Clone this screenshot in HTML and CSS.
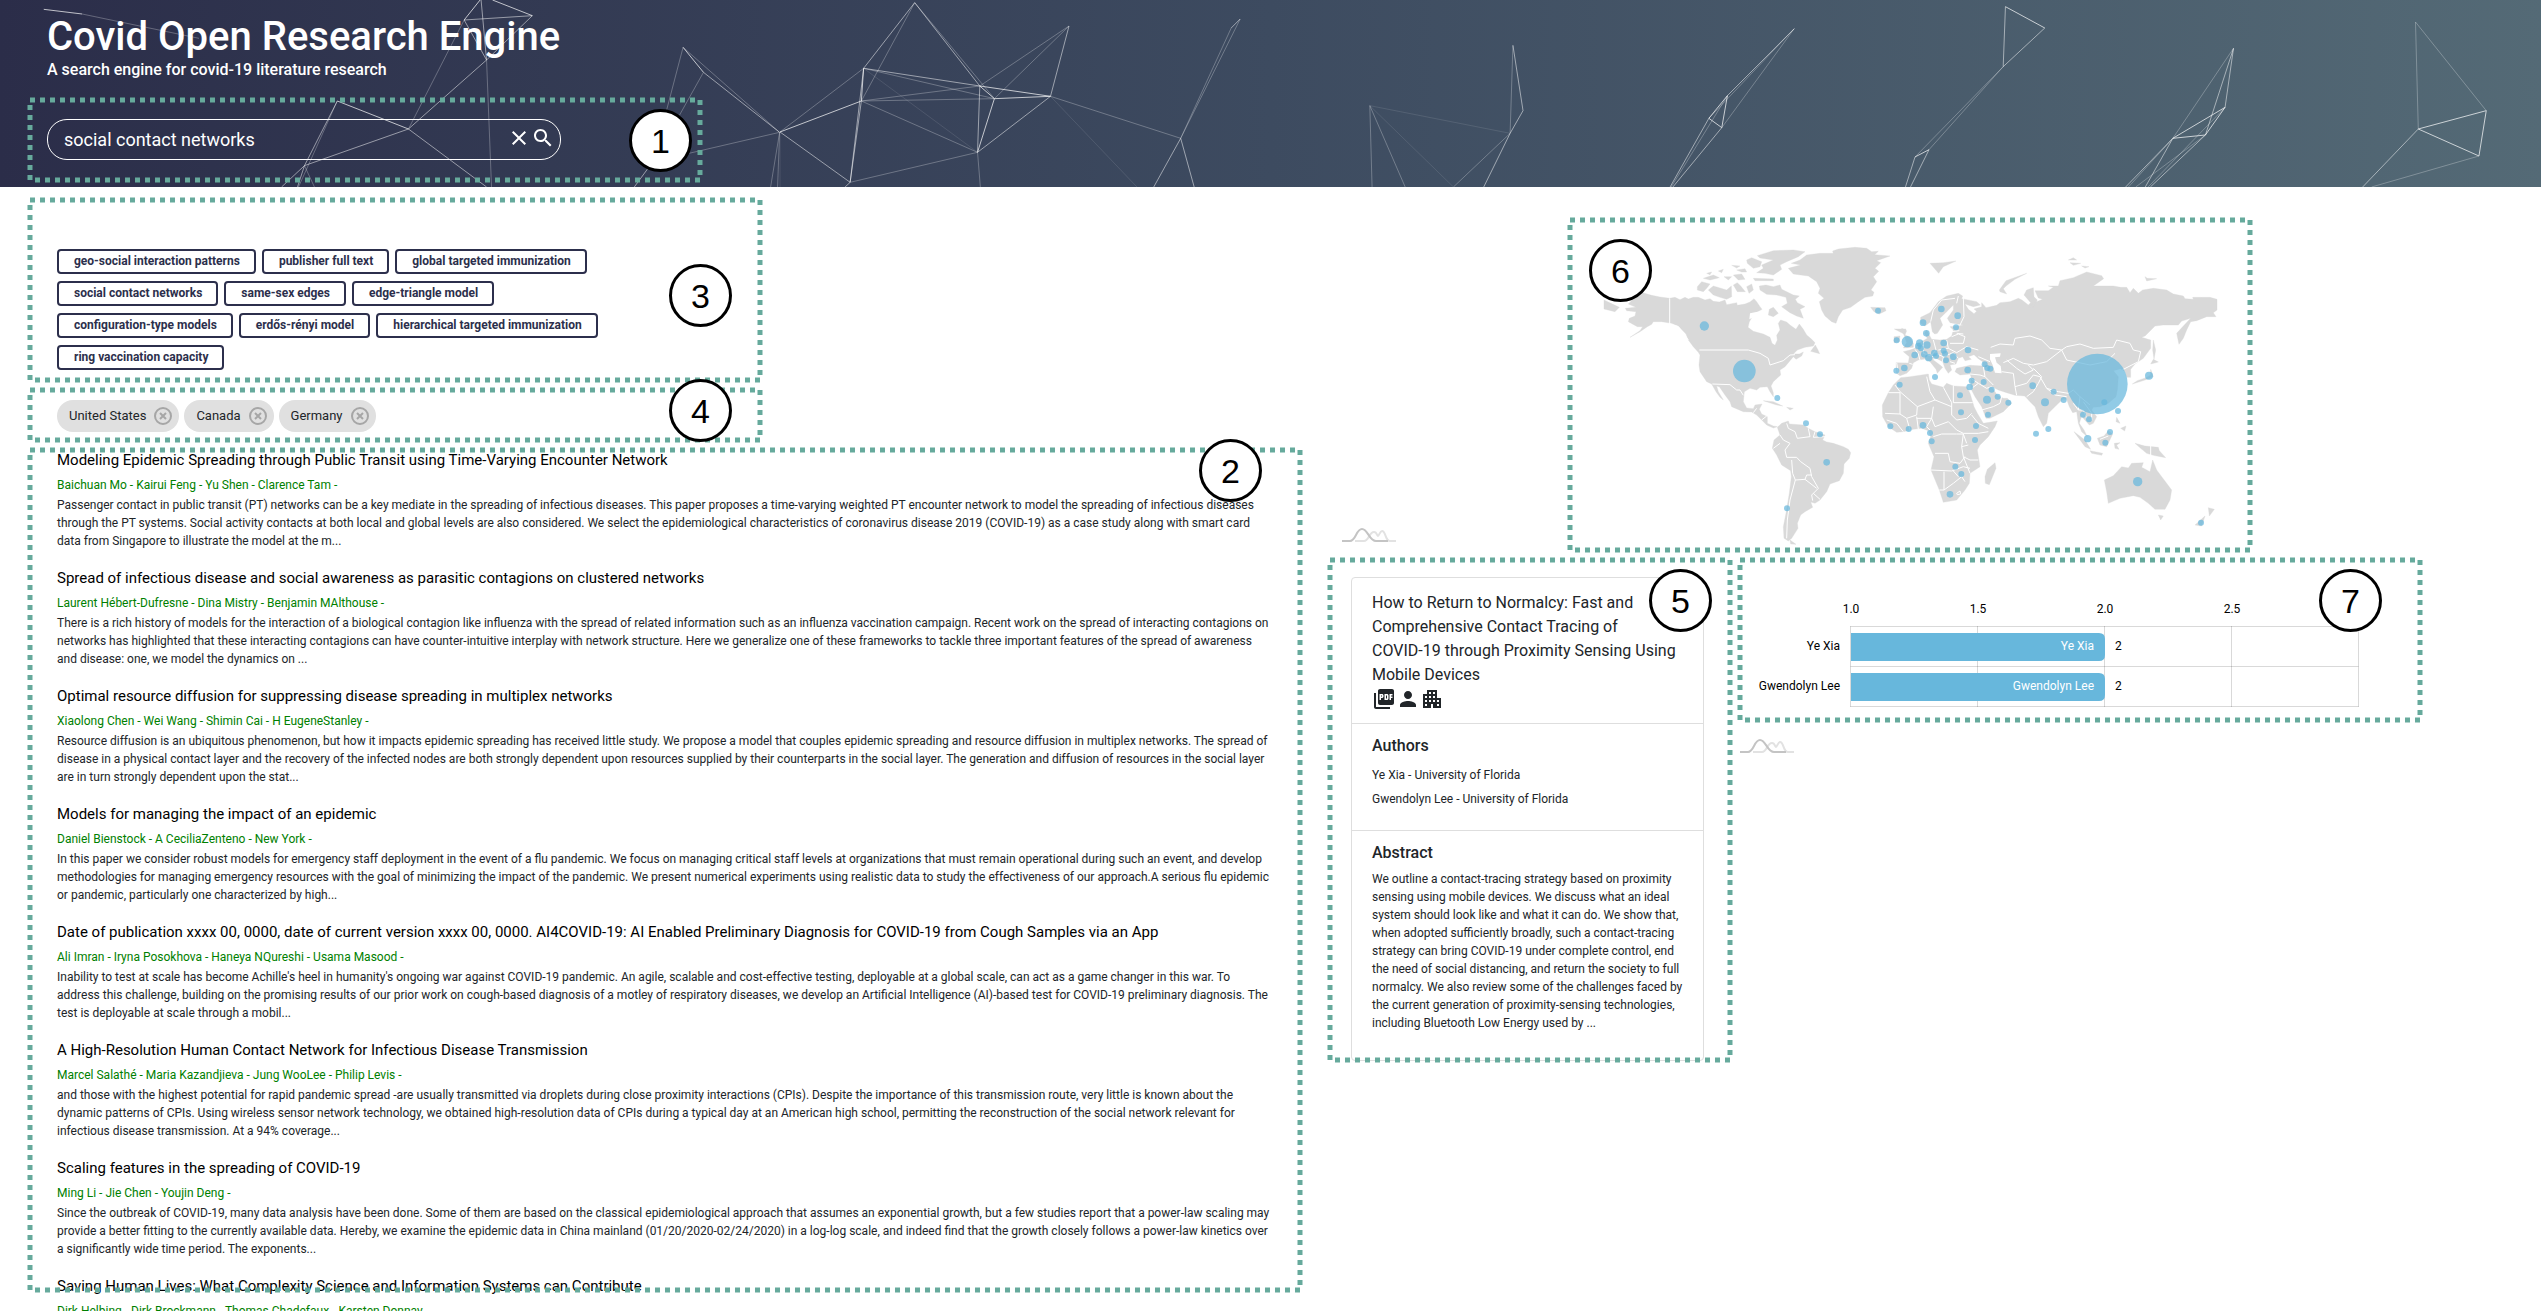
FILE: index.html
```html
<!DOCTYPE html>
<html lang="en">
<head>
<meta charset="utf-8">
<title>Covid Open Research Engine</title>
<link rel="stylesheet" href="styles.css">
</head>
<body>
<header class="masthead">
  <svg class="mesh" viewBox="0 0 2541 187" preserveAspectRatio="xMidYMid slice" aria-hidden="true">
    <g transform="scale(.4975 .3333)">
      <path class="m3" d="M88 28L165 42M965 0L933 60M990 0L1070 47M1373 142L1414 217M678 303L821 387"/>
      <path class="m2" d="M933 60L1070 47M967 0L978 180M978 180L1070 47M933 60L978 180M678 303L612 497L598 561M612 497L566 561M821 387L978 561M1414 217L1567 397M1275 561L1305 500M821 387L978 180M612 497L821 387"/>
      <path class="m1" d="M165 42L400 115M933 60L821 387M978 180L988 561M678 303L600 561M612 497L632 561M1373 142L1340 330M1414 217L1366 345M1373 142L1567 397M1385 460L1567 397M1567 397L1549 561M1567 397L1563 561"/>
    </g>
    <g transform="translate(780 0) scale(.5612 .3333)">
      <path class="m3" d="M149 205L145 303M0 396L145 303M356 258L382 296M356 258L482 289L382 296L352 457"/>
      <path class="m2" d="M240 8L149 205M240 8L356 258M149 205L356 258M356 258L352 457L482 289L515 78M0 396L125 547L116 561M145 303L125 547M149 205L125 547M804 84L820 57M714 415L666 561M714 415L738 561M1306 136L1324 332L1301 400L1254 561"/>
      <path class="m1" d="M240 8L145 303M240 8L382 296M515 78L356 258M515 78L382 296M149 205L0 396M145 303L356 258M145 303L382 296M149 205L382 296M145 303L352 457M125 547L352 457L357 561M482 289L714 415L804 84M820 57L714 415M1306 136L1301 400L1200 561M1051 317L1055 561M1051 317L1114 561"/>
      <path class="m0" d="M149 205L352 457M482 289L636 561M1051 317L1301 400M1051 317L1200 561M0 396V561"/>
    </g>
    <g transform="translate(1660 0) scale(.5617 .3333)">
      <path class="m3" d="M120 287L87 355L110 383ZM615 20L685 84M479 449L454 471M1006 322L913 415L971 405ZM1350 387L1471 332L1458 468Z"/>
      <path class="m2" d="M239 86L120 287M87 355L18 561M110 383L23 561M615 20L611 200L685 84M454 471L437 561M479 449L446 561M1021 145L1006 322M1021 145L971 405M913 415L864 561M913 415L829 561M971 405L873 561M1350 387L1251 561"/>
      <path class="m1" d="M239 86L87 355M239 86L110 383M120 287L20 561M611 200L479 449M611 200L454 471M1021 145L913 415M1006 322L869 561M971 405L847 561M913 415L834 561M1345 66L1350 387M1345 66L1471 332M1458 468L1267 561"/>
    </g>
  </svg>
  <div class="brand">
    <h1>Covid Open Research Engine</h1>
    <p>A search engine for covid-19 literature research</p>
  </div>
  <div class="region region-search">
    <form class="search" role="search">
      <input type="text" aria-label="Search" value="social contact networks">
      <button type="button" aria-label="Clear"><svg viewBox="0 0 24 24"><path d="M19 6.41L17.59 5 12 10.59 6.41 5 5 6.41 10.59 12 5 17.59 6.41 19 12 13.41 17.59 19 19 17.59 13.41 12z"/></svg></button>
      <button type="button" aria-label="Search"><svg viewBox="0 0 24 24"><path d="M15.5 14h-.79l-.28-.27C15.41 12.59 16 11.11 16 9.5 16 5.91 13.09 3 9.5 3S3 5.91 3 9.5 5.91 16 9.5 16c1.61 0 3.09-.59 4.23-1.57l.27.28v.79l5 4.99L20.49 19l-4.99-5zm-6 0C7.01 14 5 11.99 5 9.5S7.01 5 9.5 5 14 7.01 14 9.5 11.99 14 9.5 14z"/></svg></button>
    </form>
    <svg class="ring"><rect width="100%" height="100%"/></svg>
    <span class="badge">1</span>
  </div>
</header>

<main class="layout">
  <div class="left">
    <section class="region region-tags">
      <div class="tags">
        <button type="button">geo-social interaction patterns</button>
        <button type="button">publisher full text</button>
        <button type="button">global targeted immunization</button>
        <button type="button">social contact networks</button>
        <button type="button">same-sex edges</button>
        <button type="button">edge-triangle model</button>
        <button type="button">configuration-type models</button>
        <button type="button">erdős-rényi model</button>
        <button type="button">hierarchical targeted immunization</button>
        <button type="button">ring vaccination capacity</button>
      </div>
      <svg class="ring"><rect width="100%" height="100%"/></svg>
      <span class="badge">3</span>
    </section>

    <section class="region region-chips">
      <div class="chip">United States<button type="button" aria-label="Remove United States"><svg viewBox="0 0 20 20"><circle cx="10" cy="10" r="8"/><path d="M7 7l6 6M13 7l-6 6"/></svg></button></div>
      <div class="chip">Canada<button type="button" aria-label="Remove Canada"><svg viewBox="0 0 20 20"><circle cx="10" cy="10" r="8"/><path d="M7 7l6 6M13 7l-6 6"/></svg></button></div>
      <div class="chip">Germany<button type="button" aria-label="Remove Germany"><svg viewBox="0 0 20 20"><circle cx="10" cy="10" r="8"/><path d="M7 7l6 6M13 7l-6 6"/></svg></button></div>
      <svg class="ring"><rect width="100%" height="100%"/></svg>
      <span class="badge">4</span>
    </section>

    <section class="region region-results">
      <div class="results">
        <article>
          <h2><a href="#">Modeling Epidemic Spreading through Public Transit using Time-Varying Encounter Network</a></h2>
          <p class="by">Baichuan Mo - Kairui Feng - Yu Shen - Clarence Tam -</p>
          <p>Passenger contact in public transit (PT) networks can be a key mediate in the spreading of infectious diseases. This paper proposes a time-varying weighted PT encounter network to model the spreading of infectious diseases through the PT systems. Social activity contacts at both local and global levels are also considered. We select the epidemiological characteristics of coronavirus disease 2019 (COVID-19) as a case study along with smart card data from Singapore to illustrate the model at the m...</p>
        </article>
        <article>
          <h2><a href="#">Spread of infectious disease and social awareness as parasitic contagions on clustered networks</a></h2>
          <p class="by">Laurent Hébert-Dufresne - Dina Mistry - Benjamin MAlthouse -</p>
          <p>There is a rich history of models for the interaction of a biological contagion like influenza with the spread of related information such as an influenza vaccination campaign. Recent work on the spread of interacting contagions on networks has highlighted that these interacting contagions can have counter-intuitive interplay with network structure. Here we generalize one of these frameworks to tackle three important features of the spread of awareness and disease: one, we model the dynamics on ...</p>
        </article>
        <article>
          <h2><a href="#">Optimal resource diffusion for suppressing disease spreading in multiplex networks</a></h2>
          <p class="by">Xiaolong Chen - Wei Wang - Shimin Cai - H EugeneStanley -</p>
          <p>Resource diffusion is an ubiquitous phenomenon, but how it impacts epidemic spreading has received little study. We propose a model that couples epidemic spreading and resource diffusion in multiplex networks. The spread of disease in a physical contact layer and the recovery of the infected nodes are both strongly dependent upon resources supplied by their counterparts in the social layer. The generation and diffusion of resources in the social layer are in turn strongly dependent upon the stat...</p>
        </article>
        <article>
          <h2><a href="#">Models for managing the impact of an epidemic</a></h2>
          <p class="by">Daniel Bienstock - A CeciliaZenteno - New York -</p>
          <p>In this paper we consider robust models for emergency staff deployment in the event of a flu pandemic. We focus on managing critical staff levels at organizations that must remain operational during such an event, and develop methodologies for managing emergency resources with the goal of minimizing the impact of the pandemic. We present numerical experiments using realistic data to study the effectiveness of our approach.A serious flu epidemic or pandemic, particularly one characterized by high...</p>
        </article>
        <article>
          <h2><a href="#">Date of publication xxxx 00, 0000, date of current version xxxx 00, 0000. AI4COVID-19: AI Enabled Preliminary Diagnosis for COVID-19 from Cough Samples via an App</a></h2>
          <p class="by">Ali Imran - Iryna Posokhova - Haneya NQureshi - Usama Masood -</p>
          <p>Inability to test at scale has become Achille's heel in humanity's ongoing war against COVID-19 pandemic. An agile, scalable and cost-effective testing, deployable at a global scale, can act as a game changer in this war. To address this challenge, building on the promising results of our prior work on cough-based diagnosis of a motley of respiratory diseases, we develop an Artificial Intelligence (AI)-based test for COVID-19 preliminary diagnosis. The test is deployable at scale through a mobil...</p>
        </article>
        <article>
          <h2><a href="#">A High-Resolution Human Contact Network for Infectious Disease Transmission</a></h2>
          <p class="by">Marcel Salathé - Maria Kazandjieva - Jung WooLee - Philip Levis -</p>
          <p>and those with the highest potential for rapid pandemic spread -are usually transmitted via droplets during close proximity interactions (CPIs). Despite the importance of this transmission route, very little is known about the dynamic patterns of CPIs. Using wireless sensor network technology, we obtained high-resolution data of CPIs during a typical day at an American high school, permitting the reconstruction of the social network relevant for infectious disease transmission. At a 94% coverage...</p>
        </article>
        <article>
          <h2><a href="#">Scaling features in the spreading of COVID-19</a></h2>
          <p class="by">Ming Li - Jie Chen - Youjin Deng -</p>
          <p>Since the outbreak of COVID-19, many data analysis have been done. Some of them are based on the classical epidemiological approach that assumes an exponential growth, but a few studies report that a power-law scaling may provide a better fitting to the currently available data. Hereby, we examine the epidemic data in China mainland (01/20/2020-02/24/2020) in a log-log scale, and indeed find that the growth closely follows a power-law kinetics over a significantly wide time period. The exponents...</p>
        </article>
        <article>
          <h2><a href="#">Saving Human Lives: What Complexity Science and Information Systems can Contribute</a></h2>
          <p class="by">Dirk Helbing - Dirk Brockmann - Thomas Chadefaux - Karsten Donnay</p>
        </article>
      </div>
      <svg class="ring"><rect width="100%" height="100%"/></svg>
      <span class="badge">2</span>
    </section>
  </div>

  <div class="right">
    <div class="map-row">
      <svg class="am" viewBox="0 0 54 14" role="img" aria-label="amCharts"><path class="back" d="M13 13H22C27 13 27 4 32 4C35 4 35 8 36 8S38 3 40 3C44 3 43 13 48 13H54"/><path class="front" d="M0 13H8C14 13 14 1 20 1S27 13 34 13H46"/></svg>
      <section class="region region-map">
        <svg class="map" viewBox="24 24 2055 1005" role="img" aria-label="World map of results">
          <g class="land">
            <path d="M240 246L275 256 300 261 329 265 345 262 360 269 375 262 385 267 400 262 415 262 435 270 450 266 460 274 478 276 495 270 500 284 530 278 532 286 555 282 570 276 582 266 590 275 600 290 606 298 597 303 582 312 568 335 564 352 580 364 610 372 630 382 636 400 645 406 652 390 650 376 660 360 655 340 662 330 680 336 690 345 708 358 718 342 730 358 740 375 755 388 765 398 760 408 735 412 712 420 700 432 718 432 730 426 725 438 708 448 700 440 690 452 675 470 660 480 662 495 640 515 633 528 640 548 640 560 630 545 622 530 600 532 590 540 570 535 553 545 550 575 560 594 580 596 585 585 606 582 598 598 605 612 622 620 622 640 640 648 652 650 640 654 620 645 605 630 590 615 575 606 550 605 515 590 510 575 495 555 478 530 470 528 475 545 490 570 480 562 468 545 455 522 440 515 420 485 417 465 420 435 415 427 400 410 385 390 378 372 355 348 335 340 305 335 280 335 275 343 262 350 240 365 210 382 240 362 248 350 232 350 205 335 208 325 225 318 228 305 200 302 196 295 228 292 205 282Z"/>
            <path d="M652 652L665 640 685 633 688 642 730 645 745 655 765 665 795 675 788 690 800 696 820 700 850 710 865 718 872 728 868 745 852 762 850 790 838 812 810 822 800 845 780 870 765 880 752 876 758 892 735 905 722 915 712 940 714 955 695 985 685 993 672 985 670 950 678 910 688 850 694 800 692 782 665 765 650 735 637 715 642 690 660 675ZM690 990L708 1003 692 1002Z"/>
            <path d="M685 175L722 165 694 160 720 150 740 135 780 130 820 130 818 123 835 117 885 112 920 115 935 125 955 124 944 134 990 138 950 152 962 158 945 175 956 184 940 200 950 215 933 240 942 247 938 258 915 262 895 275 872 292 848 300 835 320 828 340 815 335 795 318 785 300 778 275 792 265 775 250 780 235 770 215 745 198 700 192Z"/>
            <path d="M592 137L640 122 700 120 735 125 715 140 680 155 660 165 665 178 640 195 615 190 590 188 610 175 605 165 640 150 600 144ZM640 230L660 225 665 238 700 255 718 258 706 268 712 278 735 290 720 298 730 325 710 318 690 308 665 290 682 280 678 262 650 255 620 253 600 240 598 228 618 225ZM445 240L460 228 500 240 514 228 515 260 500 268 480 262 460 255ZM412 230L425 215 450 222 440 235 430 245 412 240ZM560 150L575 143 605 155 600 170 580 175 562 160ZM430 205L460 195 478 203 450 210ZM440 190L455 186 450 194ZM475 183L490 178 485 188ZM515 166L540 168 530 174ZM530 180L555 176 560 186 545 186ZM492 200L515 200 505 210ZM520 195L545 192 555 208 535 210ZM580 205L640 207 640 212 585 212ZM560 230L575 222 580 240 567 250ZM520 225L532 218 542 228 556 245 532 245ZM628 298L640 292 655 310 640 320 625 315ZM766 405L752 424 779 431 773 418ZM132 270L178 292 165 305 132 297ZM610 572L640 575 668 588 650 585ZM680 592L700 595 690 600ZM932 292L975 293 978 302 958 312 942 305ZM1025 355L1040 362 1035 375 1048 380 1060 400 1060 412 1030 414 1040 398ZM1002 380L1020 378 1018 395 1002 398Z"/>
            <g transform="translate(1020 0)">
              <path d="M-12 458L25 459 28 440 10 425 30 420 45 415 55 400 70 392 82 385 74 370 80 360 88 375 95 388 120 390 140 388 155 378 160 360 150 350 175 348 190 345 150 338 142 325 160 300 160 285 140 305 120 325 128 345 112 370 104 372 97 365 92 335 75 348 62 340 62 322 90 308 115 275 140 258 175 250 188 258 185 266 230 275 241 285 220 290 195 282 205 298 222 311 230 304 222 297 245 290 245 278 258 293 290 286 300 278 330 275 355 265 366 270 385 285 392 278 372 255 380 240 400 233 402 260 412 270 400 290 385 291 402 278 428 268 415 264 405 242 445 242 460 232 445 228 475 228 480 212 520 203 560 186 605 197 611 206 580 228 640 228 662 232 680 232 690 248 700 235 715 250 728 240 760 235 800 240 820 252 850 258 855 266 880 268 878 262 905 262 930 262 951 268 951 300 940 308 948 320 920 320 890 332 872 335 860 360 850 385 837 403 830 370 850 348 872 325 845 333 835 345 790 345 765 348 735 378 725 382 752 390 752 415 730 445 705 462 692 478 692 502 680 502 675 485 662 476 640 482 655 500 652 540 648 560 625 580 600 590 580 592 575 600 590 620 580 640 568 645 550 625 545 618 538 640 552 660 562 680 545 665 535 640 530 605 518 608 508 590 500 568 488 568 470 585 445 610 440 640 430 650 415 620 405 590 390 575 374 558 345 556 320 548 295 540 272 528 292 555 310 565 322 565 335 580 310 605 270 625 258 625 245 590 225 560 212 535 213 500 210 492 180 495 165 485 170 475 210 466 250 468 248 455 235 446 222 434 205 440 214 448 195 452 188 440 175 445 168 462 150 465 155 480 145 490 135 475 128 455 100 440 100 450 120 465 128 472 112 490 108 478 90 455 75 447 55 450 40 458 35 475 20 490 0 497 -10 490Z"/>
              <path d="M2 503L30 500 85 492 88 510 95 522 130 532 140 520 160 528 200 530 210 550 222 590 232 610 250 640 292 633 285 650 265 680 240 705 232 720 240 770 210 790 208 820 195 840 170 870 130 877 118 840 93 780 102 740 85 700 92 680 85 662 65 655 40 658 10 665 -10 667 -35 650 -52 620 -53 585 -35 548 -20 525Z"/>
              <path d="M285 758L288 775 268 824 256 820 255 800 262 778ZM613 810L640 797 665 770 685 774 695 760 730 758 725 772 750 785 758 750 770 780 785 800 815 840 810 870 795 898 765 898 745 880 720 862 700 857 660 865 625 880 620 845ZM775 915L790 918 782 930ZM925 893L943 898 928 918ZM885 945L915 918 905 948ZM705 700L735 708 775 712 778 722 797 743 760 736 740 730 722 715ZM592 685L612 678 625 662 638 672 620 710 600 705ZM522 665L555 690 572 718 555 710ZM570 722L608 730 605 736 575 730ZM643 700L660 698 650 706 657 718 645 715ZM650 622L660 640 648 635ZM662 655L678 648 674 663ZM697 522L712 512 738 503 752 495 752 478 760 500 735 510ZM752 462L760 448 775 456ZM760 390L767 420 762 448 758 420ZM90 160L130 158 168 153 130 170 116 190ZM298 240L318 212 380 190 345 208 318 228 310 236 320 252 300 245ZM505 150L520 143 530 150ZM510 158L542 160 520 166ZM545 168L567 170 555 174ZM735 200L742 205 770 206 740 213ZM-17 357L18 357 12 372Z"/>
            </g>
          </g>
          <path class="sea" d="M1290 432L1322 430 1320 440 1305 442 1310 458 1322 468 1325 490 1305 488 1298 465 1290 448ZM568 328L570 310 600 304 602 312Z"/>
          <g class="borders">
            <path d="M329 265V342L355 350 385 390M418 420H565L600 430 625 445 630 465 670 452 690 435 705 434M457 522L510 524 530 540 540 540 550 556M580 608L590 595M605 630L620 618M680 640L685 655 705 665 712 685 750 680 745 655M765 665L760 682 795 680M660 675L670 690 690 700 675 720 680 742 710 742 722 755 750 775 755 800 775 835 755 855 758 872M640 715L660 700M695 750L698 790 706 810 735 808 740 795 755 795M735 808L770 835M706 810L690 870 682 930 680 985M760 850L780 868"/>
            <g transform="translate(1020 0)">
              <path d="M-10 458L-5 490M28 460L38 463M45 418L55 432 60 450M70 395V430L100 440M100 390L108 420 95 435M140 390L145 415 115 420M155 380L175 372 195 380 190 400 150 400M145 415L170 428 200 410 235 420M105 430L130 440 160 428 175 445M130 440L128 455M150 455L165 460M175 258L170 280M92 335L100 300 125 270 165 265M190 262L192 320 180 345M155 365L178 362M170 370L190 372M235 440L270 455M272 412L300 402 340 405 345 385 390 378 425 390 450 415 485 420 440 455 400 465 370 460 340 445 310 458M485 420L500 410 540 402 580 415 640 412 650 390 690 400 700 420 722 425 715 455 670 478M485 420L500 450 570 465 620 455 645 430M320 450L350 475 375 492 400 480 385 465M305 485L340 490 345 530 350 556M345 530L380 520 400 495 420 500M400 475L425 500 415 520 400 545 380 560M420 500L440 535 475 545 505 550 520 540 540 560 570 585M440 535L465 555 500 560M520 580L535 600M540 560L535 600 550 600 560 625M550 575L575 610 575 630M650 490L670 478M250 470L255 500 280 525M210 492L240 495 255 500M213 505L235 520 260 535 275 530M215 535L235 520M245 600L280 590 300 580 305 560M160 528V578H218M130 532L155 578 155 615 170 630 200 625 215 610M80 500L90 545 105 570 155 590M0 545L52 590 105 570M0 545L-15 525M-35 548H0V612L-45 610M0 612L20 625 50 615 52 590M-40 630L-10 640 10 665M20 625L30 660M50 620L55 658M50 625L95 625 100 590M95 625L80 650 90 660M95 625L105 650 145 635 170 660 190 670 235 670 265 665M215 615L235 640 265 655M100 680L125 672 170 672 190 672 185 710 190 740 210 750 235 750M185 710L205 705M105 730L145 730 150 755 180 760 195 740M93 780L155 783 190 770 210 775M190 740L210 790M132 785V840H118M132 840L160 820 185 800 195 815M160 783L175 800M170 850L180 843 182 852 172 854ZM190 672L200 700M752 708V735M600 688L625 678"/>
            </g>
          </g>
          <g class="spots">
            <circle cx="433" cy="348" r="14"/><circle cx="553" cy="483" r="34"/><circle cx="652" cy="564" r="9"/><circle cx="738" cy="640" r="9"/><circle cx="780" cy="673" r="9"/><circle cx="800" cy="757" r="10"/><circle cx="681" cy="895" r="9"/><circle cx="954" cy="302" r="9"/><circle cx="1010" cy="391" r="9"/><circle cx="1042" cy="395" r="17"/><circle cx="1064" cy="435" r="10"/><circle cx="1033" cy="474" r="10"/><circle cx="1009" cy="482" r="9"/><circle cx="1019" cy="524" r="9"/><circle cx="991" cy="649" r="9"/><circle cx="1046" cy="657" r="9"/>
            <g transform="translate(1020 0)">
              <circle cx="124" cy="297" r="10"/><circle cx="173" cy="317" r="10"/><circle cx="69" cy="338" r="10"/><circle cx="168" cy="352" r="9"/><circle cx="79" cy="370" r="10"/><circle cx="131" cy="399" r="10"/><circle cx="81" cy="405" r="11"/><circle cx="59" cy="399" r="11"/><circle cx="55" cy="408" r="10"/><circle cx="63" cy="415" r="9"/><circle cx="204" cy="420" r="10"/><circle cx="131" cy="422" r="9"/><circle cx="135" cy="431" r="9"/><circle cx="103" cy="429" r="10"/><circle cx="108" cy="438" r="9"/><circle cx="73" cy="433" r="10"/><circle cx="86" cy="443" r="11"/><circle cx="160" cy="440" r="10"/><circle cx="138" cy="451" r="9"/><circle cx="105" cy="501" r="9"/><circle cx="203" cy="480" r="10"/><circle cx="254" cy="463" r="9"/><circle cx="262" cy="474" r="9"/><circle cx="271" cy="476" r="9"/><circle cx="215" cy="512" r="9"/><circle cx="209" cy="531" r="10"/><circle cx="251" cy="516" r="9"/><circle cx="275" cy="539" r="9"/><circle cx="293" cy="560" r="9"/><circle cx="325" cy="578" r="9"/><circle cx="261" cy="569" r="12"/><circle cx="264" cy="614" r="9"/><circle cx="180" cy="556" r="9"/><circle cx="183" cy="607" r="9"/><circle cx="228" cy="648" r="9"/><circle cx="225" cy="690" r="9"/><circle cx="69" cy="646" r="10"/><circle cx="90" cy="669" r="9"/><circle cx="95" cy="694" r="9"/><circle cx="166" cy="770" r="9"/><circle cx="184" cy="792" r="9"/><circle cx="150" cy="853" r="10"/><circle cx="398" cy="527" r="10"/><circle cx="461" cy="545" r="9"/><circle cx="491" cy="570" r="9"/><circle cx="435" cy="577" r="12"/><circle cx="445" cy="657" r="9"/><circle cx="408" cy="671" r="9"/><circle cx="592" cy="522" r="91"/><circle cx="613" cy="577" r="9"/><circle cx="549" cy="614" r="9"/><circle cx="567" cy="628" r="9"/><circle cx="654" cy="603" r="9"/><circle cx="630" cy="666" r="9"/><circle cx="616" cy="698" r="9"/><circle cx="563" cy="686" r="11"/><circle cx="747" cy="497" r="12"/><circle cx="713" cy="815" r="14"/><circle cx="903" cy="938" r="9"/>
            </g>
          </g>
        </svg>
        <svg class="ring"><rect width="100%" height="100%"/></svg>
        <span class="badge">6</span>
      </section>
    </div>

    <section class="region region-detail">
      <div class="card">
        <div class="card-part">
          <h3 class="paper">How to Return to Normalcy: Fast and Comprehensive Contact Tracing of <span class="term">COVID-19</span> through Proximity Sensing Using Mobile Devices</h3>
          <div class="tools">
            <button type="button" aria-label="Open PDF"><svg viewBox="0 0 24 24"><path d="M20 2H8c-1.1 0-2 .9-2 2v12c0 1.1.9 2 2 2h12c1.1 0 2-.9 2-2V4c0-1.1-.9-2-2-2zm-8.5 7.5c0 .83-.67 1.5-1.5 1.5H9v2H7.5V7H10c.83 0 1.5.67 1.5 1.5v1zm5 2c0 .83-.67 1.5-1.5 1.5h-2.5V7H15c.83 0 1.5.67 1.5 1.5v3zm4-3H19v1h1.5V11H19v2h-1.5V7h3v1.5zM9 9.5h1v-1H9v1zM4 6H2v14c0 1.1.9 2 2 2h14v-2H4V6zm10 5.5h1v-3h-1v3z"/></svg></button>
            <button type="button" aria-label="Authors"><svg viewBox="0 0 24 24"><path d="M12 12c2.21 0 4-1.79 4-4s-1.79-4-4-4-4 1.79-4 4 1.79 4 4 4zm0 2c-2.67 0-8 1.34-8 4v2h16v-2c0-2.66-5.33-4-8-4z"/></svg></button>
            <button type="button" aria-label="Institutions"><svg viewBox="0 0 24 24"><path d="M17 11V3H7v4H3v14h8v-4h2v4h8V11h-4zM7 19H5v-2h2v2zm0-4H5v-2h2v2zm0-4H5V9h2v2zm4 4H9v-2h2v2zm0-4H9V9h2v2zm0-4H9V5h2v2zm4 8h-2v-2h2v2zm0-4h-2V9h2v2zm0-4h-2V5h2v2zm4 12h-2v-2h2v2zm0-4h-2v-2h2v2z"/></svg></button>
          </div>
        </div>
        <div class="card-part">
          <h4>Authors</h4>
          <ul>
            <li>Ye Xia - University of Florida</li>
            <li>Gwendolyn Lee - University of Florida</li>
          </ul>
        </div>
        <div class="card-part">
          <h4>Abstract</h4>
          <p>We outline a contact-tracing strategy based on proximity sensing using mobile devices. We discuss what an ideal system should look like and what it can do. We show that, when adopted sufficiently broadly, such a contact-tracing strategy can bring COVID-19 under complete control, end the need of social distancing, and return the society to full normalcy. We also review some of the challenges faced by the current generation of proximity-sensing technologies, including Bluetooth Low Energy used by ...</p>
        </div>
      </div>
      <svg class="ring"><rect width="100%" height="100%"/></svg>
      <span class="badge">5</span>
    </section>

    <div class="chart-col">
      <section class="region region-chart">
        <svg class="chart" viewBox="0 0 685 165" role="img" aria-label="Papers per author">
          <path class="grid" d="M112.500 68.500H620.500M112.500 108.500H620.500M112.500 148.500H620.500M112.500 68V149M239.500 68V149M366.500 68V149M493.500 68V149M620.500 68V149"/>
          <path class="bar" d="M113 75H361Q367 75 367 81V97Q367 103 361 103H113ZM113 115H361Q367 115 367 121V137Q367 143 361 143H113Z"/>
          <g class="ticks"><text x="113" y="55">1.0</text><text x="240" y="55">1.5</text><text x="367" y="55">2.0</text><text x="494" y="55">2.5</text></g>
          <g class="names"><text x="102" y="92">Ye Xia</text><text x="102" y="132">Gwendolyn Lee</text></g>
          <g class="names inbar"><text x="356" y="92">Ye Xia</text><text x="356" y="132">Gwendolyn Lee</text></g>
          <text x="377" y="92">2</text><text x="377" y="132">2</text>
        </svg>
        <svg class="ring"><rect width="100%" height="100%"/></svg>
        <span class="badge">7</span>
      </section>
      <svg class="am" viewBox="0 0 54 14" role="img" aria-label="amCharts"><path class="back" d="M13 13H22C27 13 27 4 32 4C35 4 35 8 36 8S38 3 40 3C44 3 43 13 48 13H54"/><path class="front" d="M0 13H8C14 13 14 1 20 1S27 13 34 13H46"/></svg>
    </div>
  </div>
</main>
</body>
</html>
```
FILE: styles.css
```css
* { box-sizing: border-box; }
body {
  margin: 0;
  height: 100vh;
  overflow: hidden;
  display: flex;
  flex-direction: column;
  background: #fff;
  color: #212529;
  font: 12px/18px Roboto, "Liberation Sans", sans-serif;
}
h1, h2, h3, h4, p, ul { margin: 0; padding: 0; }
ul { list-style: none; }
button { border: 0; padding: 0; background: none; font: inherit; color: inherit; }
button svg { display: block; width: 24px; height: 24px; fill: currentColor; }

/* numbered regions */
.region { position: relative; }
.ring {
  position: absolute;
  top: 2px;
  left: 2px;
  width: calc(100% - 5px);
  height: calc(100% - 5px);
  overflow: visible;
  pointer-events: none;
}
.ring rect {
  fill: none;
  stroke: #66aa9c;
  stroke-width: 5;
  stroke-dasharray: 5 5;
}
.badge {
  position: absolute;
  display: grid;
  place-items: center;
  width: 63px;
  height: 63px;
  border: 3px solid #000;
  border-radius: 50%;
  background: #fff;
  color: #000;
  font: 34px/1 "Liberation Sans", Arial, sans-serif;
}

/* header */
.masthead {
  position: relative;
  flex: none;
  padding: 13px 28px 4px;
  background: linear-gradient(to right, #2b2d49, #3d4b60 50%, #546a76);
  color: #fff;
}
.mesh {
  position: absolute;
  inset: 0;
  width: 100%;
  height: 100%;
  fill: none;
  stroke: #fff;
}
.mesh path { vector-effect: non-scaling-stroke; }
.m3 { stroke-opacity: .7; }
.m2 { stroke-opacity: .5; }
.m1 { stroke-opacity: .27; }
.m0 { stroke-opacity: .1; }
.brand { position: relative; padding-left: 19px; }
.brand h1 { font-size: 40px; line-height: 47px; font-weight: 500; }
.brand p { font-size: 16px; line-height: 19px; font-weight: 500; }
.region-search {
  width: 675px;
  height: 85px;
  margin-top: 19px;
  padding: 21px 0 0 19px;
}
.region-search .badge { top: 11px; right: 11px; }
.search {
  display: flex;
  align-items: center;
  width: 514px;
  height: 41px;
  padding: 0 5px 3px 16px;
  border: 1px solid #fff;
  border-radius: 20px;
}
.search input {
  flex: 1;
  min-width: 0;
  padding: 3px 0 0;
  border: 0;
  outline: 0;
  background: none;
  color: #fff;
  font: 18px/24px Roboto, sans-serif;
}

/* columns */
.layout {
  flex: 1;
  min-height: 0;
  display: grid;
  grid-template-columns: 1275fr 1095fr;
  column-gap: 25px;
  padding: 11px 118px 0 28px;
}
.left {
  display: flex;
  flex-direction: column;
  gap: 5px;
  min-height: 0;
  padding-bottom: 18px;
}
.region-tags {
  width: 735px;
  padding: 51px 0 14px 29px;
}
.region-tags .badge { top: 66px; right: 31px; }
.tags {
  display: flex;
  flex-wrap: wrap;
  gap: 8px 6px;
  width: 560px;
}
.tags button {
  height: 25px;
  margin-bottom: -1px;
  padding: 0 14px 0 15px;
  border: 2px solid #2c2f4c;
  border-radius: 4px;
  color: #2c2f4c;
  font-weight: 700;
  line-height: 19px;
}
.region-chips {
  display: flex;
  gap: 5px;
  width: 735px;
  padding: 12px 0 11px 29px;
}
.region-chips .badge { top: -9px; right: 31px; }
.chip {
  display: flex;
  align-items: center;
  gap: 7px;
  height: 32px;
  padding: 0 6px 0 12px;
  border-radius: 16px;
  background: #e0e0e0;
  font-size: 13px;
}
.chip svg { width: 20px; height: 20px; fill: none; stroke: #a6a6a6; stroke-width: 2; }
.region-results {
  flex: 1;
  min-height: 0;
  padding: 0 30px 0 29px;
}
.region-results .badge { top: -9px; right: 41px; }
.results { height: 0; }
.results article { margin-bottom: 16px; }
.results h2 { margin-bottom: 4px; font-size: 15px; line-height: 24px; font-weight: 400; }
.results a { color: #000; text-decoration: none; }
.results .by { margin-bottom: 2px; color: #008000; }

/* map, paper and chart */
.right {
  display: grid;
  grid-template-columns: 405fr 685fr;
  column-gap: 5px;
  align-content: start;
}
.map-row {
  grid-column: 1 / -1;
  display: flex;
  align-items: flex-end;
  padding: 20px 0 5px 14px;
}
.map-row .am { margin-bottom: 11px; }
.am { flex: none; width: 54px; height: 14px; fill: none; stroke-width: 2; }
.am .front { stroke: #c4c4c4; }
.am .back { stroke: #e2e2e2; }
.region-map {
  width: 685px;
  height: 335px;
  margin-left: 172px;
}
.region-map .badge { top: 21px; left: 21px; }
.map { display: block; width: 100%; height: 100%; }
.land { fill: #d9d9d9; stroke: #d9d9d9; stroke-width: 1; }
.sea { fill: #fff; }
.borders { fill: none; stroke: #fff; stroke-width: 3; stroke-linejoin: round; }
.spots { fill: #67b7dc; fill-opacity: .72; }

.region-detail { height: 505px; padding: 19px 29px 0 23px; }
.region-detail .badge { top: 11px; right: 21px; }
.card { border: 1px solid #dedede; border-radius: 4px; }
.card-part { padding: 12px 20px; }
.card-part:first-child { padding-top: 13px; }
.card-part + .card-part { border-top: 1px solid #dedede; }
.paper { font-size: 16px; line-height: 24px; font-weight: 400; }
.term { white-space: nowrap; }
.tools { display: flex; }
.card h4 { margin-bottom: 8px; font-size: 16px; line-height: 19px; font-weight: 500; }
.card ul { margin-bottom: 7px; line-height: 24px; }
.card p { margin-bottom: 16px; }

.chart-col .am { display: block; margin: 16px 0 0 2px; }
.region-chart .badge { top: 11px; right: 41px; }
.chart { display: block; width: 100%; font-size: 12px; fill: #000; }
.grid { fill: none; stroke: #000; stroke-opacity: .15; }
.bar { fill: #67b7dc; }
.ticks { text-anchor: middle; }
.names { text-anchor: end; }
.inbar { fill: #fff; }
```
